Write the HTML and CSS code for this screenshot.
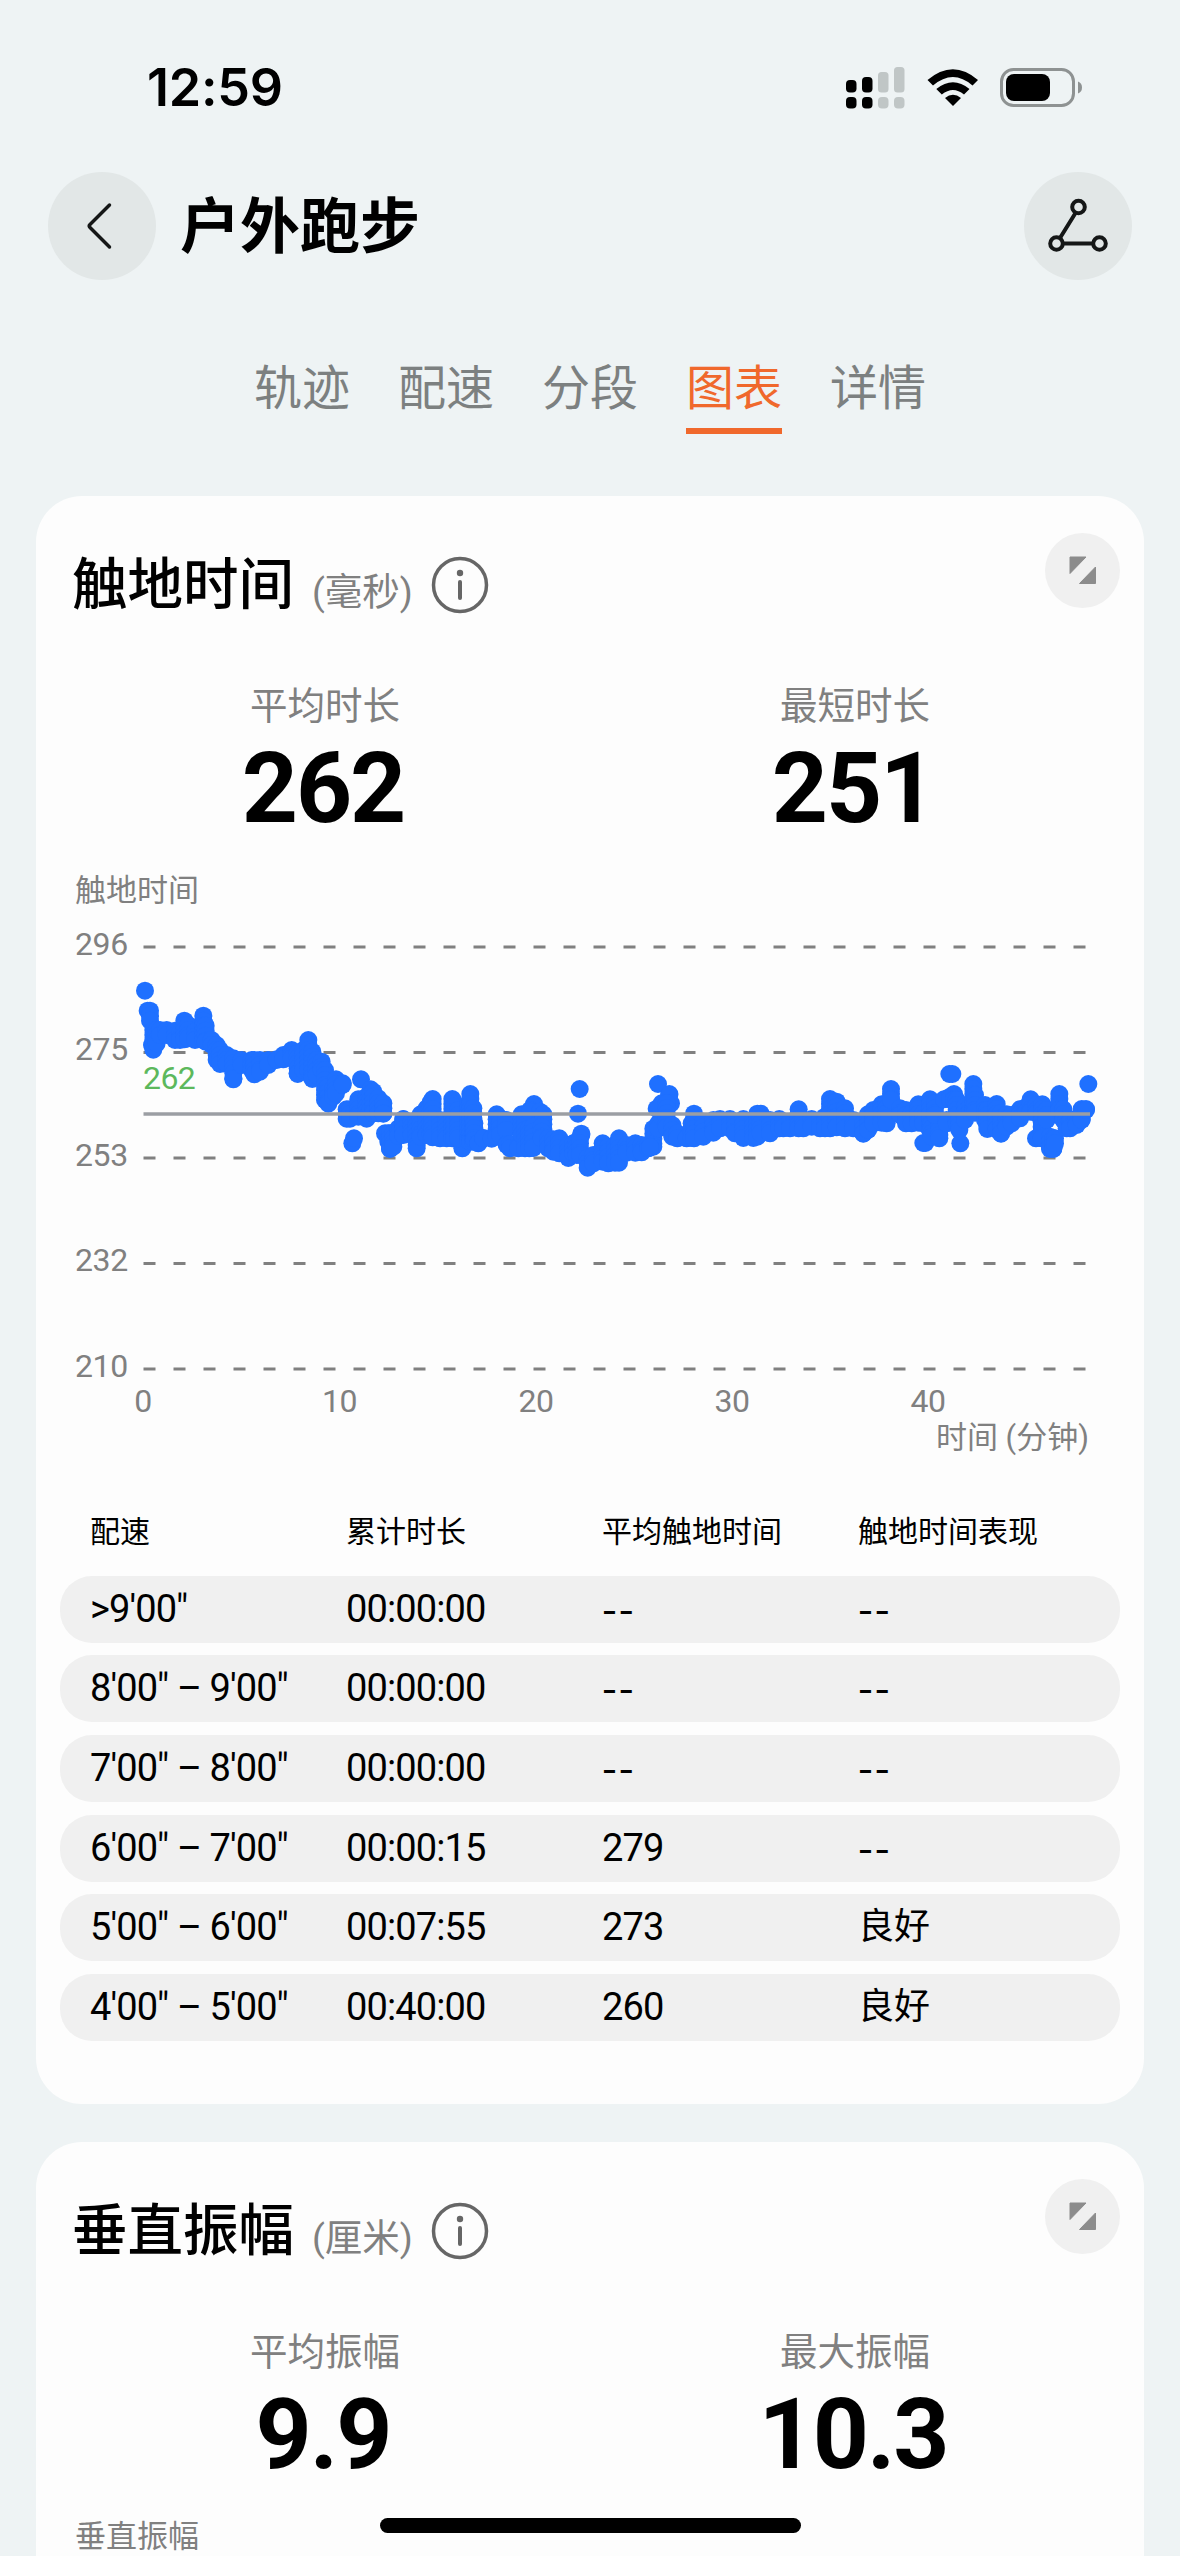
FILE: index.html
```html
<!DOCTYPE html>
<html lang="zh-CN">
<head>
    <meta charset="UTF-8">
    <meta name="viewport" content="width=device-width, initial-scale=1.0">
    <title>户外跑步</title>
    <link rel="stylesheet" href="styles.css">
</head>
<body>
    <div class="status-bar">
        <span class="clock">12:59</span>
        <div class="status-icons">
            <svg class="signal" width="60" height="42" viewBox="0 0 60 42">
                <rect x="0" y="13" width="10.5" height="12.5" rx="4"/>
                <rect x="16" y="10" width="10.5" height="15.5" rx="4"/>
                <rect class="off" x="32" y="5" width="10.5" height="20.5" rx="3.5"/>
                <rect class="off" x="48" y="0" width="10.5" height="25.5" rx="3.5"/>
                <rect x="0" y="30" width="10.5" height="11.5" rx="4"/>
                <rect x="16" y="30" width="10.5" height="11.5" rx="4"/>
                <rect class="off" x="32" y="30" width="10.5" height="11.5" rx="4"/>
                <rect class="off" x="48" y="30" width="10.5" height="11.5" rx="4"/>
            </svg>
            <svg class="wifi" width="52" height="38" viewBox="0 0 52 38">
                <path d="M0.5 11 Q26 -10.5 51 11 L45.500 16.500 Q26 -0.500 6 16.500 Z"/>
                <path d="M9.300 20 Q26 6.500 42.500 20 L37 25.500 Q26 16.500 14.800 25.500 Z"/>
                <path d="M18 29 Q26 22.500 34 29 L26 37 Z"/>
            </svg>
            <svg class="battery" width="83" height="40" viewBox="0 0 83 40">
                <rect x="1.500" y="1.500" width="72" height="36" rx="12" fill="none" stroke="#8e9292" stroke-width="3"/>
                <rect x="6" y="6" width="44" height="27" rx="8"/>
                <path d="M78 13.500 Q82 15 82 19.500 Q82 24 78 25.500 Z" fill="#8e9292"/>
            </svg>
        </div>
    </div>

    <div class="nav">
        <div class="round-btn">
            <svg width="108" height="108" viewBox="0 0 108 108">
                <path d="M61.500 33 L42 52.500 Q40.500 54 42 55.500 L61.500 75" fill="none" stroke="#151717" stroke-width="3.500" stroke-linecap="round"/>
            </svg>
        </div>
        <h1>户外跑步</h1>
        <div class="round-btn">
            <svg width="108" height="108" viewBox="0 0 108 108" fill="none" stroke="#151717" stroke-width="4">
                <circle cx="54.500" cy="35" r="6.300"/>
                <circle cx="32.500" cy="71.500" r="6.300"/>
                <circle cx="75.500" cy="71.500" r="6.300"/>
                <path d="M51.500 41 L36 66 M39 71.500 H69"/>
            </svg>
        </div>
    </div>

    <div class="tabs">
        <span>轨迹</span>
        <span>配速</span>
        <span>分段</span>
        <span class="active">图表</span>
        <span>详情</span>
    </div>

    <div class="card">
        <div class="card-head">
            <h2>触地时间</h2>
            <span class="unit">(毫秒)</span>
            <svg class="info" width="58" height="58" viewBox="0 0 58 58">
                <circle cx="29" cy="29" r="26.500" fill="none" stroke="#666" stroke-width="3.500"/>
                <circle cx="29" cy="17" r="3.200" fill="#666"/>
                <path d="M29 26 V42" stroke="#666" stroke-width="4" stroke-linecap="round"/>
            </svg>
            <svg class="expand" width="75" height="75" viewBox="0 0 75 75">
                <circle cx="37.500" cy="37.500" r="37.500" fill="#f0f0f0"/>
                <path d="M25 24 H41 L25 40.500 Z M50.500 34 V50.500 H34.500 Z" fill="#8c8c8c" stroke="#8c8c8c" stroke-width="1" stroke-linejoin="round"/>
            </svg>
        </div>
        <div class="stats">
            <div class="stat">
                <div class="label">平均时长</div>
                <div class="value">262</div>
            </div>
            <div class="stat">
                <div class="label">最短时长</div>
                <div class="value">251</div>
            </div>
        </div>
        <div class="chart-title">触地时间</div>
        <svg class="chart" width="1060" height="560" viewBox="60 910 1060 560">
            <g class="grid">
                <path d="M143.500 947 H1087"/>
                <path d="M143.500 1052.500 H1087"/>
                <path d="M143.500 1158 H1087"/>
                <path d="M143.500 1263.500 H1087"/>
                <path d="M143.500 1369 H1087"/>
            </g>
            <g class="axis">
                <text x="75" y="955">296</text>
                <text x="75" y="1060">275</text>
                <text x="75" y="1166">253</text>
                <text x="75" y="1271">232</text>
                <text x="75" y="1377">210</text>
            </g>
            <g class="axis middle">
                <text x="143" y="1412">0</text>
                <text x="339.500" y="1412">10</text>
                <text x="536" y="1412">20</text>
                <text x="732" y="1412">30</text>
                <text x="928" y="1412">40</text>
            </g>
            <text class="axis-name" x="1089" y="1448">时间 (分钟)</text>
            <g id="dots"></g>
            <path class="average" d="M143.500 1114 H1090"/>
            <text class="average-label" x="143" y="1089">262</text>
        </svg>

        <div class="table">
            <div class="row head">
                <span>配速</span><span>累计时长</span><span>平均触地时间</span><span>触地时间表现</span>
            </div>
            <div class="row">
                <span>&gt;9'00"</span><span>00:00:00</span><span class="none">--</span><span class="none">--</span>
            </div>
            <div class="row">
                <span>8'00" – 9'00"</span><span>00:00:00</span><span class="none">--</span><span class="none">--</span>
            </div>
            <div class="row">
                <span>7'00" – 8'00"</span><span>00:00:00</span><span class="none">--</span><span class="none">--</span>
            </div>
            <div class="row">
                <span>6'00" – 7'00"</span><span>00:00:15</span><span>279</span><span class="none">--</span>
            </div>
            <div class="row">
                <span>5'00" – 6'00"</span><span>00:07:55</span><span>273</span><span class="grade">良好</span>
            </div>
            <div class="row">
                <span>4'00" – 5'00"</span><span>00:40:00</span><span>260</span><span class="grade">良好</span>
            </div>
        </div>
    </div>

    <div class="card last">
        <div class="card-head">
            <h2>垂直振幅</h2>
            <span class="unit">(厘米)</span>
            <svg class="info" width="58" height="58" viewBox="0 0 58 58">
                <circle cx="29" cy="29" r="26.500" fill="none" stroke="#666" stroke-width="3.500"/>
                <circle cx="29" cy="17" r="3.200" fill="#666"/>
                <path d="M29 26 V42" stroke="#666" stroke-width="4" stroke-linecap="round"/>
            </svg>
            <svg class="expand" width="75" height="75" viewBox="0 0 75 75">
                <circle cx="37.500" cy="37.500" r="37.500" fill="#f0f0f0"/>
                <path d="M25 24 H41 L25 40.500 Z M50.500 34 V50.500 H34.500 Z" fill="#8c8c8c" stroke="#8c8c8c" stroke-width="1" stroke-linejoin="round"/>
            </svg>
        </div>
        <div class="stats">
            <div class="stat">
                <div class="label">平均振幅</div>
                <div class="value">9.9</div>
            </div>
            <div class="stat">
                <div class="label">最大振幅</div>
                <div class="value">10.3</div>
            </div>
        </div>
        <div class="chart-title">垂直振幅</div>
    </div>

    <div class="home-bar"></div>

    <script src="chart.js"></script>
</body>
</html>
```

FILE: styles.css
```css
* {
    box-sizing: border-box;
}

body {
    margin: 0;
    height: 2556px;
    overflow: hidden;
    background: #eef3f4;
    color: #000;
    font-family: Roboto, "Noto Sans CJK SC", sans-serif;
}

svg {
    display: block;
}

h1, h2 {
    margin: 0;
}

.status-bar {
    display: flex;
    justify-content: space-between;
    align-items: center;
    height: 172px;
    padding: 3px 97px 0 147px;
}

.clock {
    font-family: Inter, sans-serif;
    font-size: 52px;
    font-weight: 600;
    line-height: 60px;
    letter-spacing: -0.2px;
}

.status-icons {
    display: flex;
    align-items: center;
    gap: 21px;
}

.signal .off {
    fill: #c0c6c6;
}

.nav {
    display: flex;
    align-items: center;
    height: 108px;
    padding: 0 48px;
}

.nav h1 {
    flex: 1;
    margin-left: 24px;
    padding-top: 4px;
    font-size: 60px;
    font-weight: 700;
    line-height: 104px;
}

.round-btn {
    width: 108px;
    height: 108px;
    border-radius: 50%;
    background: #e2e7e7;
}

.tabs {
    display: flex;
    justify-content: center;
    gap: 48px;
    padding-top: 72px;
    height: 216px;
    font-size: 48px;
    line-height: 74px;
    color: #7c8080;
}

.tabs span {
    height: 82px;
}

.tabs .active {
    color: #f0682c;
    border-bottom: 6px solid #f0682c;
}

.card {
    width: 1108px;
    height: 1608px;
    margin: 0 0 38px 36px;
    padding: 37px 24px 0;
    border-radius: 46px;
    background: #fdfdfd;
}

.last {
    height: 414px;
    margin-bottom: 0;
    border-radius: 46px 46px 0 0;
}

.card-head {
    display: flex;
    align-items: flex-start;
    height: 148px;
    padding-left: 12px;
}

.card-head h2 {
    font-size: 55.5px;
    font-weight: 500;
    line-height: 105px;
}

.unit {
    margin-left: 18px;
    font-size: 37.5px;
    line-height: 118px;
    color: #808080;
}

.info {
    margin: 23px auto 0 18px;
}

.stats {
    display: flex;
    text-align: center;
}

.stat {
    width: 530px;
}

.label {
    font-size: 37.5px;
    line-height: 51px;
    color: #808080;
}

.value {
    font-size: 98px;
    font-weight: 700;
    line-height: 114px;
    letter-spacing: -2px;
    text-indent: -4px;
}

.chart-title {
    height: 64px;
    padding: 25px 0 0 15px;
    font-size: 31px;
    line-height: 40px;
    color: #808080;
}

.grid path {
    stroke: #808080;
    stroke-width: 3;
    stroke-dasharray: 12 18;
}

.axis {
    font-size: 32px;
    letter-spacing: -0.4px;
    fill: #808080;
}

.middle {
    text-anchor: middle;
}

.axis-name {
    font-size: 31px;
    text-anchor: end;
    fill: #808080;
}

#dots {
    fill: #1f70ff;
}

.average {
    stroke: #9b9ea3;
    stroke-width: 3.5;
}

.average-label {
    font-size: 32px;
    letter-spacing: -0.6px;
    fill: #5cb85c;
}

.table {
    display: flex;
    flex-direction: column;
    gap: 12.7px;
    padding-top: 26px;
}

.row {
    display: grid;
    grid-template-columns: repeat(4, 256px);
    height: 67px;
    padding-left: 30px;
    border-radius: 32px;
    background: #f0f0f0;
    font-size: 38px;
    line-height: 66px;
    letter-spacing: -0.9px;
}

.head {
    background: none;
    font-size: 30px;
    line-height: 72px;
    letter-spacing: 0;
}

.none {
    font-family: "Noto Sans CJK SC", sans-serif;
    font-size: 43px;
    line-height: 60px;
    letter-spacing: 1.8px;
}

.grade {
    font-size: 36px;
    letter-spacing: 0;
}

.home-bar {
    position: fixed;
    left: 380px;
    top: 2518px;
    width: 421px;
    height: 15px;
    border-radius: 8px;
    background: #000;
}
```

FILE: chart.js
```js
// each sample is [x, highest, lowest], three units to a pixel
const start = [
    [255,272,272],[263,332,332],[270,332,362],[276,435,435],[280,390,449],[290,390,430],[300,390,405],[320,390,405],[345,392,420],
    [360,400,420],[373,362,418],[385,375,415],[405,395,420],[430,347,420],[437,377,425],[455,420,435],[470,435,480],[480,450,492],
    [500,465,492],[520,475,538],[545,480,495],[575,480,510],[583,480,523],[600,480,515],[625,480,495],[650,478,480],[670,465,478],
    [695,450,475],[713,460,522],[730,450,510],[745,420,510],[757,455,537],[770,480,525],[785,485,510],[795,510,600],[805,560,611],
    [820,565,590],[828,538,580],[848,550,555],[860,628,656],[870,628,656],[877,730,730],[882,715,715],[895,598,650],[903,538,538],
    [920,590,656],[932,568,628],[940,575,640],[955,595,640],[970,610,641],[975,700,700],[985,700,725],[990,700,747],[1000,700,740],
    [1015,685,708],[1030,658,700]
];

const middle = [
    [10,297,345],[35,305,345],[50,300,385],[62,283,350],[80,265,345],[92,247,345],[98,237,352],[120,300,355],[140,300,355],
    [157,237,355],[162,260,355],[187,270,385],[175,270,355],[205,250,362],[211,222,365],[220,265,365],[223,310,360],[235,368,370],
    [250,354,355],[275,354,356],[290,283,350],[300,295,345],[318,300,330],[320,372,375],[330,372,385],[355,380,385],[365,283,345],
    [375,300,385],[388,325,385],[402,252,260],[390,270,275],[420,275,370],[430,283,340],[400,320,384],[425,320,355],[445,355,385],
    [460,358,395],[478,355,400],[505,375,414],[520,370,400],[530,365,405],[539,207,207],[534,281,281],[544,341,345],[540,355,405],
    [563,413,443],[580,405,430],[608,370,425],[625,380,430],[645,375,428],[657,355,428],[680,375,398],[706,370,398],[725,375,397],
    [745,375,385],[760,326,380],[750,380,382],[775,310,325],[774,192,192],[808,222,225],[813,250,250],[785,250,290],[770,266,266],
    [800,250,322],[817,315,350],[832,340,355],[860,354,355],[875,310,353],[882,281,355],[910,305,350],[940,300,338],[960,297,325],
    [990,297,325],[1005,305,340]
];

const end = [
    [10,297,354],[40,300,354],[52,281,350],[62,281,340],[90,300,340],[118,297,325],[130,305,325],[150,305,325],[176,268,325],
    [190,300,325],[215,297,320],[240,300,325],[255,290,325],[270,237,325],[290,245,322],[315,265,325],[340,300,325],[370,310,341],
    [384,283,330],[400,270,310],[425,253,308],[440,250,310],[453,207,240],[480,265,285],[498,270,310],[515,280,310],[535,253,308],
    [550,280,310],[570,238,330],[550,369,369],[556,369,369],[575,310,350],[598,300,355],[585,250,285],[612,238,238],[620,300,310],
    [628,162,162],[637,162,162],[630,230,238],[642,222,240],[650,240,310],[658,300,330],[661,370,370],[675,260,300],[690,260,275],
    [700,192,275],[705,225,278],[735,255,300],[742,270,327],[770,252,328],[783,280,341],[800,283,320],[815,285,310],[840,268,295],
    [860,260,275],[872,238,275],[890,255,280],[907,253,330],[888,355,355],[905,305,355],[920,270,300],[930,350,387],[940,355,387],
    [945,355,370],[958,222,270],[970,268,300],[980,300,325],[990,305,325],[1010,295,315],[1025,267,300],[1038,267,270],[1045,192,192]
];

function plot(samples, left, top) {
    const group = document.getElementById('dots');
    for (const [x, high, low] of samples) {
        for (let y = high; y < low + 15; y += 15) {
            const dot = document.createElementNS('http://www.w3.org/2000/svg', 'circle');
            dot.setAttribute('cx', left + x / 3);
            dot.setAttribute('cy', top + Math.min(y, low) / 3);
            dot.setAttribute('r', 9);
            group.appendChild(dot);
        }
    }
}

plot(start, 60, 900);
plot(middle, 400, 1020);
plot(end, 740, 1020);
```
